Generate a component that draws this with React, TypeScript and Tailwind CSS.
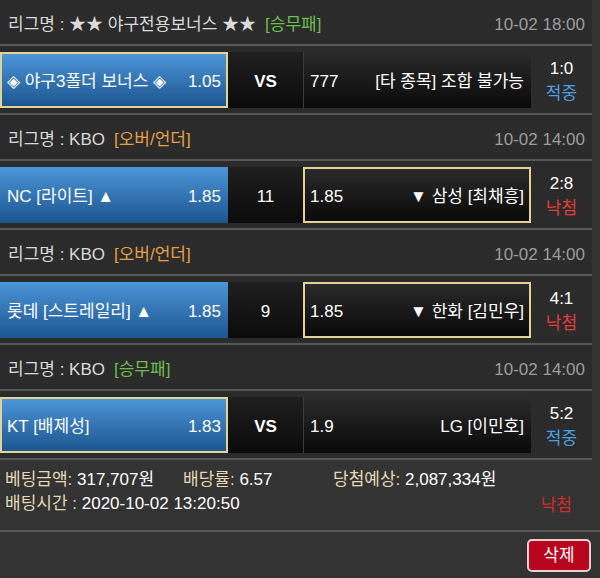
import React from 'react'

type Bet = {
  league: string
  tag: string
  tagColor: string
  time: string
  home: string
  homeOdds: string
  mid: string
  awayOdds: string
  away: string
  pick: 'home' | 'away'
  score: string
  win: boolean
}

const bets: Bet[] = [
  {
    league: '★★ 야구전용보너스 ★★',
    tag: '[승무패]',
    tagColor: 'text-[#6cbf4e]',
    time: '10-02 18:00',
    home: '◈ 야구3폴더 보너스 ◈',
    homeOdds: '1.05',
    mid: 'VS',
    awayOdds: '777',
    away: '[타 종목] 조합 불가능',
    pick: 'home',
    score: '1:0',
    win: true,
  },
  {
    league: 'KBO',
    tag: '[오버/언더]',
    tagColor: 'text-[#e4a046]',
    time: '10-02 14:00',
    home: 'NC [라이트] ▲',
    homeOdds: '1.85',
    mid: '11',
    awayOdds: '1.85',
    away: '▼ 삼성 [최채흥]',
    pick: 'away',
    score: '2:8',
    win: false,
  },
  {
    league: 'KBO',
    tag: '[오버/언더]',
    tagColor: 'text-[#e4a046]',
    time: '10-02 14:00',
    home: '롯데 [스트레일리] ▲',
    homeOdds: '1.85',
    mid: '9',
    awayOdds: '1.85',
    away: '▼ 한화 [김민우]',
    pick: 'away',
    score: '4:1',
    win: false,
  },
  {
    league: 'KBO',
    tag: '[승무패]',
    tagColor: 'text-[#6cbf4e]',
    time: '10-02 14:00',
    home: 'KT [배제성]',
    homeOdds: '1.83',
    mid: 'VS',
    awayOdds: '1.9',
    away: 'LG [이민호]',
    pick: 'home',
    score: '5:2',
    win: true,
  },
]

function BetBlock({ bet }: { bet: Bet }) {
  const homePicked = bet.pick === 'home'
  const awayPicked = bet.pick === 'away'
  return (
    <div>
      <div className="h-[46px] bg-[#2b2b2b] flex items-center justify-between pt-[5px] pl-[8px] pr-[7px] border-b-2 border-[#575757]">
        <span className="text-[#dadada]">
          리그명 : {bet.league}
          <span className={'ml-[9px] ' + bet.tagColor}>{bet.tag}</span>
        </span>
        <span className="text-[#9c9c9c]">{bet.time}</span>
      </div>
      <div className="flex bg-[#2b2b2b] pt-[6px] pb-[5px] border-b-2 border-[#575757]">
        <div
          className={
            'w-[228px] h-[56px] flex items-center justify-between pt-[3px] bg-gradient-to-b from-[#4d95d8] to-[#1c5690] text-white ' +
            (homePicked ? 'border-2 border-[#e2d395] pl-[5px] pr-[5px]' : 'pl-[7px] pr-[7px]')
          }
        >
          <span>{bet.home}</span>
          <span>{bet.homeOdds}</span>
        </div>
        <div
          className={
            'w-[75px] h-[56px] flex items-center justify-center pt-[3px] bg-gradient-to-b from-[#1f1f1f] to-[#0b0b0b] text-white ' +
            (bet.mid === 'VS' ? 'font-bold' : '')
          }
        >
          {bet.mid}
        </div>
        <div
          className={
            'w-[228px] h-[56px] flex items-center justify-between pt-[3px] bg-gradient-to-b from-[#2b2b2b] to-[#0a0a0a] text-white ' +
            (awayPicked
              ? 'border-2 border-[#e2d395] pl-[5px] pr-[5px]'
              : 'border-l border-[#3c3c3c] pl-[6px] pr-[7px]')
          }
        >
          <span>{bet.awayOdds}</span>
          <span>{bet.away}</span>
        </div>
        <div className="w-[61px] h-[56px] flex flex-col items-center justify-center pt-[2px] leading-[25px]">
          <span className="text-white">{bet.score}</span>
          <span className={bet.win ? 'text-[#4d9fe0]' : 'text-[#e03c3c]'}>
            {bet.win ? '적중' : '낙첨'}
          </span>
        </div>
      </div>
    </div>
  )
}

export default function App() {
  return (
    <div
      className="w-[600px] h-[578px] bg-[#333333] text-[17px] leading-[24px] overflow-hidden"
      style={{ fontFamily: '"Liberation Sans", "Noto Sans CJK KR", sans-serif' }}
    >
      <div className="w-[592px]">
        {bets.map((b, i) => (
          <BetBlock key={i} bet={b} />
        ))}
      </div>
      <div className="h-[72px] pt-[8px] pl-[5px] border-b-2 border-[#5a5a5a]">
        <div className="flex">
          <div className="w-[178px]">
            <span className="text-[#e2dab4]">베팅금액: </span>
            <span className="text-white">317,707원</span>
          </div>
          <div className="w-[150px]">
            <span className="text-[#e2dab4]">배당률: </span>
            <span className="text-white">6.57</span>
          </div>
          <div>
            <span className="text-[#e2dab4]">당첨예상: </span>
            <span className="text-white">2,087,334원</span>
          </div>
        </div>
        <div className="flex justify-between pr-[28px]">
          <div>
            <span className="text-[#e2dab4]">배팅시간 : </span>
            <span className="text-white">2020-10-02 13:20:50</span>
          </div>
          <span className="text-[#d42a2a] mt-[2px]">낙첨</span>
        </div>
      </div>
      <div className="flex justify-end pr-[9px] pt-[7px]">
        <button
          type="button"
          className="w-[64px] h-[33px] bg-[#b7061d] border-2 border-[#e9cfcf] rounded-[5px] text-white text-[17px]"
        >
          삭제
        </button>
      </div>
    </div>
  )
}
